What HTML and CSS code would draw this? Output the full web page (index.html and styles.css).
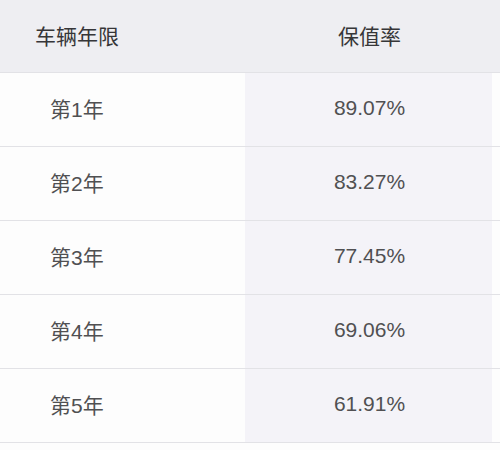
FILE: index.html
```html
<!DOCTYPE html>
<html lang="zh-CN">
<head>
<meta charset="utf-8">
<link rel="stylesheet" href="styles.css">
</head>
<body>
<div class="table">
  <div class="row head">
    <div class="cell c1">车辆年限</div>
    <div class="cell c2">保值率</div>
    <div class="cell c3"></div>
  </div>
  <div class="row">
    <div class="cell c1 yr">第1年</div>
    <div class="cell c2">89.07%</div>
    <div class="cell c3"></div>
  </div>
  <div class="row">
    <div class="cell c1 yr">第2年</div>
    <div class="cell c2">83.27%</div>
    <div class="cell c3"></div>
  </div>
  <div class="row">
    <div class="cell c1 yr">第3年</div>
    <div class="cell c2">77.45%</div>
    <div class="cell c3"></div>
  </div>
  <div class="row">
    <div class="cell c1 yr">第4年</div>
    <div class="cell c2">69.06%</div>
    <div class="cell c3"></div>
  </div>
  <div class="row">
    <div class="cell c1 yr">第5年</div>
    <div class="cell c2">61.91%</div>
    <div class="cell c3"></div>
  </div>
</div>
</body>
</html>
```
FILE: styles.css
```css
html, body {
  margin: 0;
  padding: 0;
  background: #fdfdfd;
}
body {
  font-family: "Liberation Sans", "Noto Sans CJK SC", sans-serif;
  font-size: 21px;
  color: #505052;
  width: 500px;
  height: 450px;
  overflow: hidden;
}
.table {
  display: flex;
  flex-direction: column;
}
.row {
  display: grid;
  grid-template-columns: 245px 247px 1fr;
  height: 73px;
  border-bottom: 1px solid #e2e2e6;
}
.row.head {
  height: 72px;
  background: #eeeef2;
  color: #363638;
}
.cell {
  display: flex;
  align-items: center;
  padding-bottom: 3px;
  box-sizing: border-box;
}
.c1 {
  padding-left: 35px;
}
.c1.yr {
  padding-left: 50px;
}
.c2 {
  justify-content: center;
  padding-left: 2px;
}
.row:not(.head) .c2 {
  background: #f4f3f8;
}
```
